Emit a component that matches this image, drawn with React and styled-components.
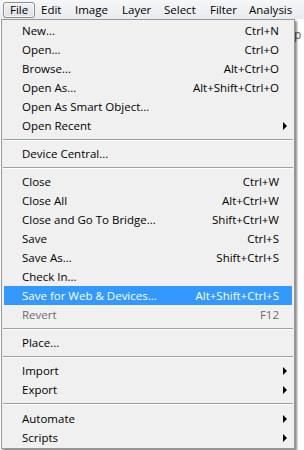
import React from 'react';
import styled, { createGlobalStyle } from 'styled-components';

const GlobalStyle = createGlobalStyle`
  html, body {
    margin: 0;
    padding: 0;
    background: #ffffff;
  }
  body {
    font-family: "Segoe UI", "Open Sans", "Noto Sans", sans-serif;
    font-size: 11.5px;
    color: #000;
    overflow: hidden;
  }
`;

// widths chosen so each title starts where it does in the toolbar
const topMenus = [
  { name: 'File', w: 32 },
  { name: 'Edit', w: 34 },
  { name: 'Image', w: 47 },
  { name: 'Layer', w: 42 },
  { name: 'Select', w: 46 },
  { name: 'Filter', w: 39 },
  { name: 'Analysis', w: 54 },
];

const items = [
  { label: 'New...', shortcut: 'Ctrl+N' },
  { label: 'Open...', shortcut: 'Ctrl+O' },
  { label: 'Browse...', shortcut: 'Alt+Ctrl+O' },
  { label: 'Open As...', shortcut: 'Alt+Shift+Ctrl+O' },
  { label: 'Open As Smart Object...' },
  { label: 'Open Recent', sub: true },
  { sep: true },
  { label: 'Device Central...' },
  { sep: true },
  { label: 'Close', shortcut: 'Ctrl+W' },
  { label: 'Close All', shortcut: 'Alt+Ctrl+W' },
  { label: 'Close and Go To Bridge...', shortcut: 'Shift+Ctrl+W' },
  { label: 'Save', shortcut: 'Ctrl+S' },
  { label: 'Save As...', shortcut: 'Shift+Ctrl+S' },
  { label: 'Check In...' },
  { label: 'Save for Web & Devices...', shortcut: 'Alt+Shift+Ctrl+S', active: true },
  { label: 'Revert', shortcut: 'F12', disabled: true },
  { sep: true },
  { label: 'Place...' },
  { sep: true },
  { label: 'Import', sub: true },
  { label: 'Export', sub: true },
  { sep: true, tall: true },
  { label: 'Automate', sub: true },
  { label: 'Scripts', sub: true },
];

export default function App() {
  return (
    <>
      <GlobalStyle />
      <Screen>
        <MenuBar>
          {topMenus.map((m, i) => (
            <BarItem key={m.name} $w={m.w} $open={i === 0}>{m.name}</BarItem>
          ))}
        </MenuBar>
        <Body>
          <Dropdown>
            {items.map((it, i) =>
              it.sep ? (
                <Separator key={i} $tall={it.tall} />
              ) : (
                <Row key={i} $active={it.active} $disabled={it.disabled}>
                  <Label>{it.label}</Label>
                  {it.shortcut && <Shortcut>{it.shortcut}</Shortcut>}
                  {it.sub && <Arrow $active={it.active} />}
                </Row>
              )
            )}
          </Dropdown>
          <Behind>
            <Glimpse>p</Glimpse>
          </Behind>
        </Body>
      </Screen>
    </>
  );
}

const Screen = styled.div`
  width: 304px;
  height: 450px;
  display: flex;
  flex-direction: column;
  overflow: hidden;
`;

const MenuBar = styled.div`
  height: 19px;
  display: flex;
  align-items: center;
  padding-left: 3px;
  background: linear-gradient(#f6f7f9, #e7eaef);
  flex-shrink: 0;
  white-space: nowrap;
`;

const BarItem = styled.div`
  flex-shrink: 0;
  width: ${p => p.$w}px;
  box-sizing: border-box;
  height: 16px;
  line-height: 14px;
  padding: 0 0 0 6px;
  border: 1px solid ${p => (p.$open ? '#8c8c8c' : 'transparent')};
  border-radius: 3px;
  margin-right: ${p => (p.$open ? '-1px' : '0')};
  background: ${p => (p.$open ? 'linear-gradient(#eef0f3, #dfe2e6)' : 'transparent')};
  box-shadow: ${p => (p.$open ? 'inset 0 0 0 1px rgba(255,255,255,0.7)' : 'none')};
`;

const Body = styled.div`
  flex: 1;
  display: flex;
  align-items: flex-start;
  padding-left: 1px;
`;

const Dropdown = styled.div`
  width: 294px;
  height: 430px;
  box-sizing: border-box;
  border: 1px solid #979797;
  background: #f0f0f0;
  padding: 1px 2px;
  display: flex;
  flex-direction: column;
  box-shadow: 2px 2px 2px rgba(0, 0, 0, 0.45);
  position: relative;
  z-index: 1;
`;

const Row = styled.div`
  height: 19px;
  flex-shrink: 0;
  display: flex;
  align-items: center;
  position: relative;
  padding-left: 18px;
  padding-right: 13px;
  background: ${p => (p.$active ? '#3399ff' : 'transparent')};
  color: ${p => (p.$active ? '#ffffff' : p.$disabled ? '#6d6d6d' : '#000000')};
`;

const Label = styled.span`
  flex: 1;
  white-space: nowrap;
`;

const Shortcut = styled.span`
  white-space: nowrap;
`;

const Arrow = styled.span`
  position: absolute;
  right: 5px;
  top: 6px;
  width: 0;
  height: 0;
  border-top: 4px solid transparent;
  border-bottom: 4px solid transparent;
  border-left: 4px solid ${p => (p.$active ? '#fff' : '#000')};
`;

const Separator = styled.div`
  height: ${p => (p.$tall ? 10 : 9)}px;
  flex-shrink: 0;
  display: flex;
  align-items: center;
  margin: 0 -1px;

  &::before {
    content: '';
    flex: 1;
    height: 1px;
    background: #a0a0a0;
    border-bottom: 1px solid #ffffff;
  }
`;

const Behind = styled.div`
  flex: 1;
  height: 100%;
  background: #ffffff;
  padding-top: 7px;
  overflow: hidden;
`;

const Glimpse = styled.span`
  display: block;
  margin-left: -1px;
  font-size: 12px;
  color: #555;
`;
